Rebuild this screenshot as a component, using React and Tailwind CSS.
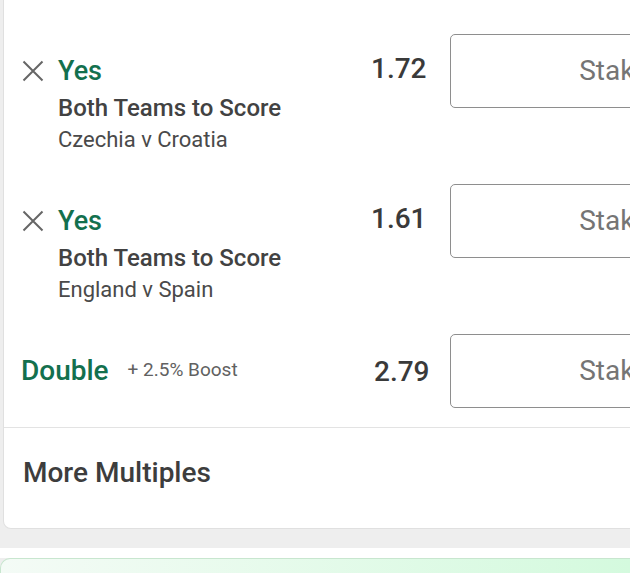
import React from "react";

function XIcon() {
  return (
    <svg width="22" height="22" viewBox="0 0 22 22" className="shrink-0 mt-[4px]">
      <path d="M1.5 1.5 L20.5 20.5 M20.5 1.5 L1.5 20.5" stroke="#666666" strokeWidth="2" fill="none" />
    </svg>
  );
}

function StakeInput() {
  return (
    <div className="ml-[24px] w-[216px] h-[74px] shrink-0 rounded-[5px] border border-[#8e8e8e] bg-white flex items-center justify-end pr-[16px]">
      <span className="text-[28px] leading-[32px] text-[#757575]">Stake</span>
    </div>
  );
}

function SelectionRow({ match, odds }) {
  return (
    <div className="flex items-start pl-[18px]">
      <div className="w-[348px] shrink-0 flex items-start pt-[22px]">
        <XIcon />
        <div className="ml-[14px] flex flex-col">
          <span className="text-[27px] leading-[30px] font-medium text-[#13704e]">Yes</span>
          <span className="mt-[6px] text-[24px] leading-[32px] font-medium text-[#424242]">Both Teams to Score</span>
          <span className="mt-[2px] text-[22px] leading-[28px] text-[#4a4a4a]">{match}</span>
        </div>
      </div>
      <div className="w-[56px] shrink-0 pl-[1px] pt-[19px] text-[28px] leading-[32px] font-medium text-[#3a3a3a]">{odds}</div>
      <StakeInput />
    </div>
  );
}

export default function App() {
  return (
    <div className="w-[630px] h-[573px] overflow-hidden bg-[#eeeeee] font-['Roboto',sans-serif]">
      <div className="ml-[3px] w-[680px] bg-white border-l border-r border-b border-[#e0e0e0] rounded-bl-[8px]">
        <div className="pt-[34px] flex flex-col gap-[30px]">
          <SelectionRow match="Czechia v Croatia" odds="1.72" />
          <SelectionRow match="England v Spain" odds="1.61" />
          <div className="flex items-start pl-[17px]">
            <div className="w-[349px] shrink-0 flex items-start">
              <span className="pt-[21px] text-[28px] leading-[32px] font-medium text-[#13704e]">Double</span>
              <span className="ml-[19px] pt-[24px] text-[19px] leading-[24px] text-[#616161]">+ 2.5% Boost</span>
            </div>
            <div className="w-[56px] shrink-0 pl-[4px] pt-[22px] text-[28px] leading-[32px] font-medium text-[#3a3a3a]">2.79</div>
            <StakeInput />
          </div>
        </div>
        <div className="mt-[19px] h-px bg-[#e3e3e3]" />
        <div className="pl-[19px] pt-[29px] pb-[39px] text-[28px] leading-[32px] font-medium text-[#3d3d3d]">More Multiples</div>
      </div>
      <div className="h-[19px]" />
      <div className="h-[10px] bg-white" />
      <div className="h-[40px] border-t border-l border-[#c8e6cf] rounded-tl-[10px] bg-gradient-to-r from-[#f4fbf6] to-[#d4fade]" />
    </div>
  );
}
